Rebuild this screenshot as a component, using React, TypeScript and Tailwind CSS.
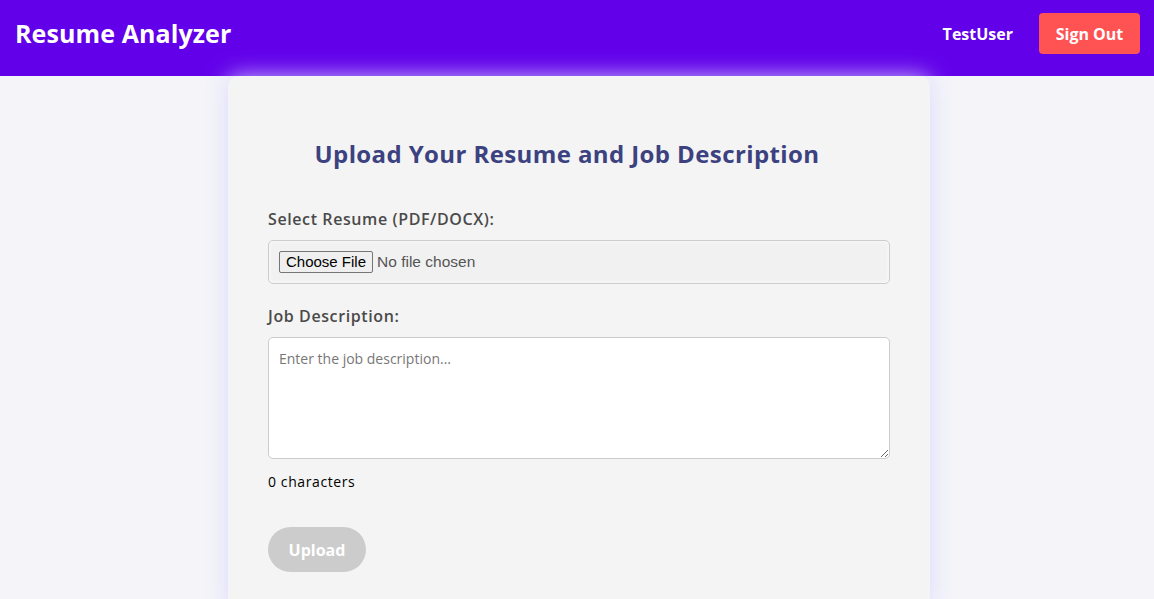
import React, { useState } from "react";

export default function App() {
  const [text, setText] = useState("");
  return (
    <div className="min-h-screen bg-[#f4f4f9]">
      <div className="font-['Open_Sans','Noto_Sans',sans-serif]">
        <header className="h-[76px] bg-[#6200ea] flex items-start justify-between pt-[13px] pl-[15px] pr-[14px]">
          <h1 className="text-white font-bold text-[25px] leading-[41px] tracking-[0.1px]">Resume Analyzer</h1>
          <div className="flex items-center gap-[26px]">
            <span className="text-white font-bold text-[16px]">TestUser</span>
            <button className="bg-[#ff5252] text-white font-bold text-[16px] rounded-[4px] w-[101px] h-[41px]">
              Sign Out
            </button>
          </div>
        </header>
        <main className="flex justify-center pl-[4px]">
          <div className="w-[702px] bg-[#f4f4f4] rounded-[10px] shadow-[0_0_22px_rgba(214,214,255,0.85)] px-[40px] pt-[60px] pb-[40px]">
            <h2 className="text-center text-[#3c4280] font-bold text-[24px] leading-[36px] tracking-[0.4px] pr-[24px]">
              Upload Your Resume and Job Description
            </h2>
            <label className="block mt-[35px] text-[#4a4a4a] text-[16px] leading-[24px] font-semibold tracking-[0.6px]">
              Select Resume (PDF/DOCX):
            </label>
            <input
              type="file"
              className="mt-[9px] block w-full py-[10px] px-[10px] border border-[#ccc] rounded-[5px] bg-[#f1f1f1] shadow-[inset_0_0_4px_rgba(255,255,255,0.9)] text-[#555] text-[15.5px] leading-[22px] font-['Liberation_Sans',Arial,sans-serif] file:font-['Liberation_Sans',Arial,sans-serif] file:text-[15px] file:leading-[18px] file:text-black file:bg-[#efefef] file:border file:border-[#767676] file:rounded-[2px] file:px-[6px] file:py-[1px] file:mr-[4px]"
            />
            <label className="block mt-[20px] text-[#4a4a4a] text-[16px] leading-[24px] font-semibold tracking-[0.6px]">
              Job Description:
            </label>
            <textarea
              value={text}
              onChange={(e) => setText(e.target.value)}
              placeholder="Enter the job description..."
              className="mt-[9px] block w-full h-[122px] p-[10px] bg-white border border-[#ccc] rounded-[5px] text-[14px] placeholder:text-[#777] outline-none"
            />
            <p className="mt-[13px] text-[14px] leading-[20px] text-black tracking-[0.6px]">{text.length} characters</p>
            <button
              disabled
              className="mt-[35px] w-[98px] h-[45px] rounded-full bg-[#cccccc] text-white font-bold text-[16px]"
            >
              Upload
            </button>
          </div>
        </main>
      </div>
    </div>
  );
}
